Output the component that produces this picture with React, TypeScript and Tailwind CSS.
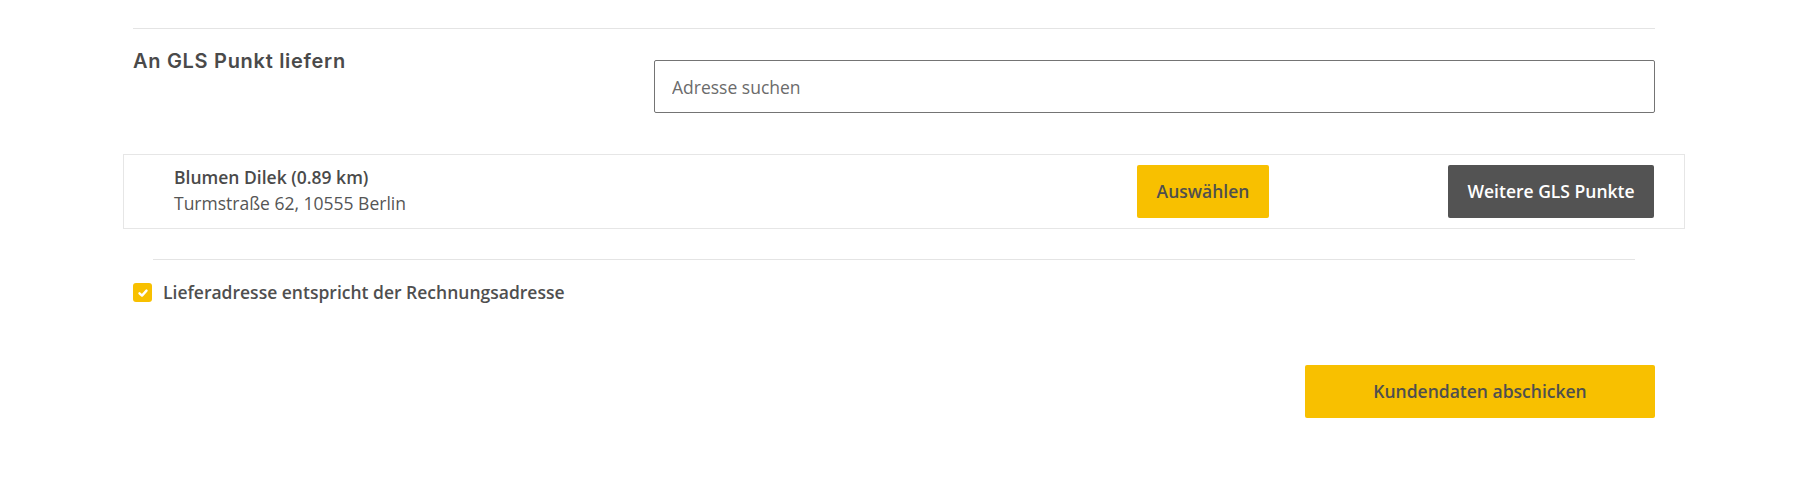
export default function App() {
    return (
        <div className="min-h-[479px] w-full bg-white font-['Open_Sans',sans-serif] text-[#4f4f4f]">
            <div className="ml-[133px] w-[1522px] pt-[28px]">
                <div className="border-t border-[#e4e4e4]" />

                <div className="mt-[31px] flex items-start">
                    <h2 className="-mt-[11px] w-[521px] font-['Inter',sans-serif] text-[20px] font-semibold leading-[24px] tracking-[0.7px] text-[#4a4a4a]">
                        An GLS Punkt liefern
                    </h2>
                    <input
                        type="text"
                        placeholder="Adresse suchen"
                        className="h-[53px] flex-1 rounded-[2px] border border-[#747474] px-[17px] text-[17.5px] text-[#555] placeholder:text-[#6b6b6b] focus:outline-none"
                    />
                </div>

                <div className="-ml-[10px] -mr-[30px] mt-[41px] flex items-center border border-[#e6e6e6] py-[10px] pl-[50px] pr-[30px]">
                    <div className="-mt-[4px] flex-1 text-[17.5px] leading-[26px]">
                        <p className="font-semibold text-[#4a4a4a]">Blumen Dilek (0.89 km)</p>
                        <p className="text-[#555]">Turmstraße 62, 10555 Berlin</p>
                    </div>
                    <button className="h-[53px] w-[132px] rounded-[2px] bg-[#f8c000] text-[17.5px] font-semibold text-[#4f4f4f]">
                        Auswählen
                    </button>
                    <button className="ml-[179px] h-[53px] w-[206px] rounded-[2px] bg-[#535353] text-[17.5px] font-semibold text-white">
                        Weitere GLS Punkte
                    </button>
                </div>

                <div className="mx-[20px] mt-[30px] border-t border-[#e4e4e4]" />

                <label className="mt-[23px] flex items-center gap-[11px]">
                    <span className="flex h-[19px] w-[19px] items-center justify-center rounded-[3px] bg-[#f8c000]">
                        <svg viewBox="0 0 12 12" className="h-[12px] w-[12px]" fill="none" stroke="white" strokeWidth="2.4" strokeLinecap="round" strokeLinejoin="round">
                            <path d="M2.5 6.3 L5 8.6 L9.5 3.6" />
                        </svg>
                    </span>
                    <span className="text-[17.5px] font-semibold leading-[19px] text-[#4f4f4f]">
                        Lieferadresse entspricht der Rechnungsadresse
                    </span>
                </label>

                <div className="mt-[63px] flex justify-end">
                    <button className="h-[53px] w-[350px] rounded-[2px] bg-[#f8c000] text-[17.5px] font-semibold text-[#4f4f4f]">
                        Kundendaten abschicken
                    </button>
                </div>
            </div>
        </div>
    );
}
